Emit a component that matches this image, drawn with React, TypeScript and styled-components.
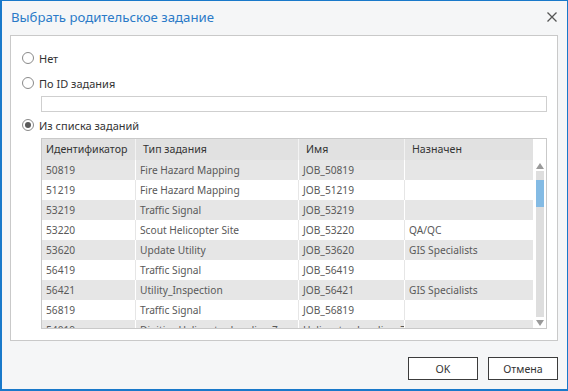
import styled, { createGlobalStyle } from "styled-components"

const GlobalStyle = createGlobalStyle`
  html, body {
    margin: 0;
    padding: 0;
    background: #ffffff;
  }
  * {
    box-sizing: border-box;
  }
`

type Job = {
  id: string
  type: string
  name: string
  assigned: string
}

const jobs: Job[] = [
  { id: "50819", type: "Fire Hazard Mapping", name: "JOB_50819", assigned: "" },
  { id: "51219", type: "Fire Hazard Mapping", name: "JOB_51219", assigned: "" },
  { id: "53219", type: "Traffic Signal", name: "JOB_53219", assigned: "" },
  { id: "53220", type: "Scout Helicopter Site", name: "JOB_53220", assigned: "QA/QC" },
  { id: "53620", type: "Update Utility", name: "JOB_53620", assigned: "GIS Specialists" },
  { id: "56419", type: "Traffic Signal", name: "JOB_56419", assigned: "" },
  { id: "56421", type: "Utility_Inspection", name: "JOB_56421", assigned: "GIS Specialists" },
  { id: "56819", type: "Traffic Signal", name: "JOB_56819", assigned: "" },
  { id: "54019", type: "Digitize Helicopter Landing Zone", name: "Helicopter_Landing_7", assigned: "" },
]

const columns = "94px 163px 106px 128px"

const Window = styled.div`
  width: 568px;
  height: 391px;
  border: 1px solid #1979ca;
  border-left-width: 2px;
  border-bottom-width: 2px;
  background: #f5f6f7;
  display: flex;
  flex-direction: column;
  font-family: "Noto Sans", "Open Sans", sans-serif;
  font-size: 11px;
`

const TitleBar = styled.div`
  height: 34px;
  display: flex;
  align-items: center;
  justify-content: space-between;
  padding: 0 9px 2px 9px;
`

const Title = styled.h1`
  margin: 0;
  font-size: 13.2px;
  font-weight: normal;
  color: #2a7ac8;
`

const CloseBtn = styled.button`
  border: 0;
  background: none;
  padding: 0;
  width: 12px;
  height: 12px;
  display: flex;
  align-items: center;
  justify-content: center;
  cursor: pointer;
`

const Panel = styled.div`
  margin: 0 9px 0 8px;
  height: 306px;
  background: #ffffff;
  border: 1px solid #c9c9c9;
  padding: 12px 10px 10px 11px;
  display: flex;
  flex-direction: column;
`

const Option = styled.label<{ $top?: number }>`
  height: 20px;
  margin-top: ${p => p.$top ?? 0}px;
  display: flex;
  align-items: center;
  gap: 5px;
  color: #333333;
`

const Radio = styled.span<{ $checked?: boolean }>`
  width: 12px;
  height: 12px;
  border-radius: 50%;
  border: 1px solid #8a8a8a;
  background: #ffffff;
  display: flex;
  align-items: center;
  justify-content: center;
  &::after {
    content: "";
    width: 6px;
    height: 6px;
    border-radius: 50%;
    background: ${p => (p.$checked ? "#5a5a5a" : "transparent")};
  }
`

const Indented = styled.div<{ $top: number }>`
  margin-left: 19px;
  margin-top: ${p => p.$top}px;
`

const TextInput = styled.input`
  display: block;
  width: 506px;
  height: 16px;
  border: 1px solid #cfcfcf;
  outline: none;
`

const Table = styled.div`
  width: 506px;
  height: 191px;
  border: 1px solid #c9c9c9;
  display: flex;
  background: #ffffff;
  overflow: hidden;
`

const TableMain = styled.div`
  width: 491px;
  display: flex;
  flex-direction: column;
`

const Row = styled.div<{ $shade?: boolean }>`
  display: grid;
  grid-template-columns: ${columns};
  height: 20px;
  flex-shrink: 0;
  font-size: 10.2px;
  background: ${p => (p.$shade ? "#e6e6e6" : "#ffffff")};
  color: #595959;
`

const HeaderRow = styled(Row)`
  height: 21px;
  font-size: 10.6px;
  background: #e1e1e1;
  color: #333333;
`

const Cell = styled.div<{ $shade?: boolean; $last?: boolean }>`
  padding-left: 4px;
  line-height: 20px;
  white-space: nowrap;
  overflow: hidden;
  border-right: ${p => (p.$last ? "0" : `1px solid ${p.$shade ? "#ffffff" : "#e6e6e6"}`)};
`

const HeadCell = styled.div<{ $first?: boolean; $last?: boolean }>`
  padding-left: ${p => (p.$first ? 4 : 7)}px;
  line-height: 21px;
  white-space: nowrap;
  overflow: hidden;
  border-right: ${p => (p.$last ? "0" : "1px solid #f2f2f2")};
`

const Scroller = styled.div`
  width: 13px;
  display: flex;
  flex-direction: column;
  align-items: center;
  padding-top: 21px;
`

const Arrow = styled.div<{ $down?: boolean }>`
  height: 11px;
  display: flex;
  align-items: center;
  justify-content: center;
  &::after {
    content: "";
    border-left: 4px solid transparent;
    border-right: 4px solid transparent;
    ${p => (p.$down ? "border-top: 6px solid #9a9a9a;" : "border-bottom: 6px solid #9a9a9a;")}
  }
`

const Track = styled.div`
  width: 8px;
  flex: 1;
  background: #dedede;
  padding-top: 9px;
`

const Thumb = styled.div`
  height: 27px;
  background: #84bbe4;
`

const Footer = styled.div`
  flex: 1;
  display: flex;
  justify-content: flex-end;
  align-items: flex-start;
  gap: 10px;
  padding: 16px 9px 0 0;
`

const Button = styled.button`
  width: 70px;
  height: 23px;
  border: 1px solid #3c3c3c;
  background: #ffffff;
  color: #333333;
  font-family: inherit;
  font-size: 10.6px;
  padding: 0;
`

export default function App() {
  return (
    <>
      <GlobalStyle />
      <Window>
        <TitleBar>
          <Title>Выбрать родительское задание</Title>
          <CloseBtn aria-label="Закрыть">
            <svg width="10" height="10" viewBox="0 0 10 10">
              <path d="M0.5 0.5 L9.5 9.5 M9.5 0.5 L0.5 9.5" stroke="#555" strokeWidth="1.3" />
            </svg>
          </CloseBtn>
        </TitleBar>
        <Panel>
          <Option>
            <Radio />
            Нет
          </Option>
          <Option $top={5}>
            <Radio />
            По ID задания
          </Option>
          <Indented $top={3}>
            <TextInput />
          </Indented>
          <Option $top={3}>
            <Radio $checked />
            Из списка заданий
          </Option>
          <Indented $top={3}>
            <Table>
              <TableMain>
                <HeaderRow>
                  <HeadCell $first>Идентификатор</HeadCell>
                  <HeadCell>Тип задания</HeadCell>
                  <HeadCell>Имя</HeadCell>
                  <HeadCell $last>Назначен</HeadCell>
                </HeaderRow>
                {jobs.map((job, i) => {
                  const shade = i % 2 === 0
                  return (
                    <Row key={job.id} $shade={shade}>
                      <Cell $shade={shade}>{job.id}</Cell>
                      <Cell $shade={shade}>{job.type}</Cell>
                      <Cell $shade={shade}>{job.name}</Cell>
                      <Cell $shade={shade} $last>{job.assigned}</Cell>
                    </Row>
                  )
                })}
              </TableMain>
              <Scroller>
                <Arrow />
                <Track>
                  <Thumb />
                </Track>
                <Arrow $down />
              </Scroller>
            </Table>
          </Indented>
        </Panel>
        <Footer>
          <Button>OK</Button>
          <Button>Отмена</Button>
        </Footer>
      </Window>
    </>
  )
}
